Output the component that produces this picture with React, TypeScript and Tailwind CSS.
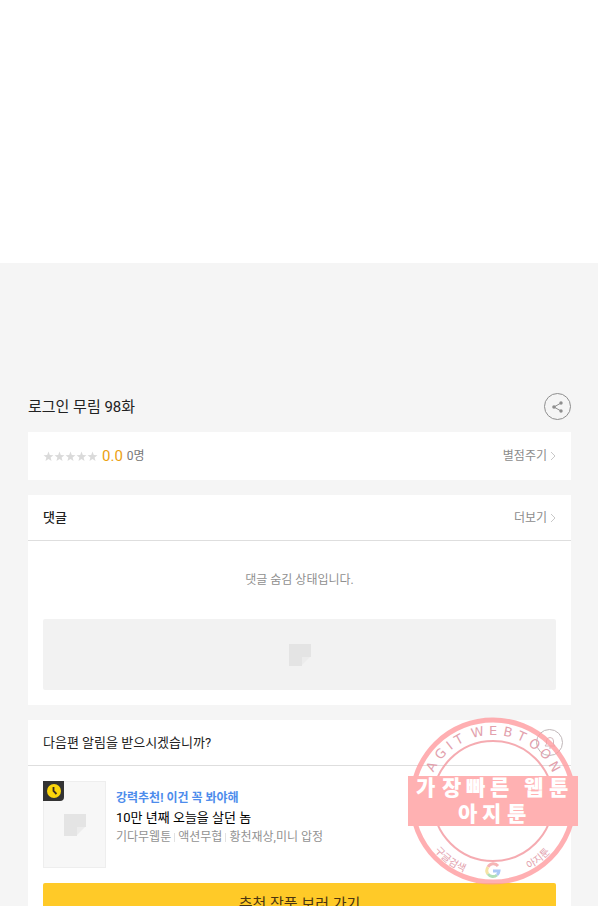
import { ReactNode } from 'react'

const FONT = "font-['Roboto','Noto_Sans_CJK_KR',sans-serif]"

const Arrow = () => (
  <svg width="6" height="10" viewBox="0 0 6 10" fill="none" stroke="#c8c8c8" aria-hidden="true">
    <path d="M1 1l4 4-4 4" />
  </svg>
)

const Star = () => (
  <svg width="11" height="11" viewBox="0 0 12 12" fill="#dadada" aria-hidden="true">
    <path d="M6 .6l1.4 3.7 4 .2-3.1 2.5 1 3.9L6 8.700l-3.300 2.200 1-3.900L.6 4.500l4-.2z" />
  </svg>
)

const Placeholder = () => (
  <svg width="22" height="22" viewBox="0 0 22 22" aria-hidden="true">
    <path d="M0 0h22v13h-9v9H0z" fill="#e4e4e4" />
    <path d="M13 13h8l-8 8z" fill="#ececec" />
  </svg>
)

const Card = ({ className = '', children }: { className?: string; children: ReactNode }) => (
  <section className={`bg-white ${className}`}>{children}</section>
)

const MoreLink = ({ children }: { children: ReactNode }) => (
  <a href="#" className="flex items-center gap-[3px] text-[12px] leading-[18px] text-[#8c8c8c]">
    {children}
    <Arrow />
  </a>
)

// angle from the top of the ring and half the glyph width, one entry per character
const RING_TEXT = 'AGIT WEBTOON'
const RING = [
  [-61, 4], [-48, 5], [-38, 2], [-29, 4], [-21, 2], [-13, 6],
  [0, 4], [12, 4], [24, 4], [36, 5], [48, 5], [61, 5],
].map(([angle, half]) => {
  const a = (angle * Math.PI) / 180
  return {
    angle,
    x: 86 + 66 * Math.sin(a) - half * Math.cos(a),
    y: 85 - 66 * Math.cos(a) - half * Math.sin(a),
  }
})

const Stamp = () => (
  <svg
    className="pointer-events-none absolute -top-1 -right-2"
    width="172"
    height="172"
    viewBox="0 0 172 172"
    fill="none"
    aria-hidden="true"
  >
    <defs>
      <path id="arc-bottom" d="M9 85a77 77 0 0 0 154 0" />
    </defs>
    <circle cx="86" cy="85" r="81" stroke="#ff9b9f" strokeOpacity=".8" strokeWidth="5" />
    <circle cx="86" cy="85" r="60" stroke="#f3969d" strokeOpacity=".8" strokeWidth="2" />
    <g fill="#e2a0ac" style={{ fontFamily: "'Noto Sans CJK KR', sans-serif" }}>
      <text
        fontSize="13"
        style={{ fontFamily: "'DejaVu Sans', sans-serif" }}
        x={RING.map((r) => r.x).join(' ')}
        y={RING.map((r) => r.y).join(' ')}
        rotate={RING.map((r) => r.angle).join(' ')}
      >
        {RING_TEXT}
      </text>
      <text fontSize="10">
        <textPath href="#arc-bottom" startOffset="54">구글검색</textPath>
      </text>
      <text fontSize="10">
        <textPath href="#arc-bottom" startOffset="158">아지툰</textPath>
      </text>
    </g>
    <path d="M1 60h170v50H1z" fill="#ffb1b2" />
    <g
      fill="#fff"
      fontWeight="900"
      fontSize="21"
      style={{ fontFamily: "'Noto Sans CJK KR', sans-serif" }}
    >
      <text x="9 35 59 83 105 117 142" y="79">가장빠른 웹툰</text>
      <text x="51 75 100" y="105">아지툰</text>
    </g>
    <g strokeWidth="3">
      <path d="M91 150a6 6 0 0 0-10 1" stroke="#f6b5b5" />
      <path d="M81 151a6 6 0 0 0 0 7" stroke="#f5e3a4" />
      <path d="M81 158a6 6 0 0 0 9 1" stroke="#b1dfb9" />
      <path d="M90 159a6 6 0 0 0 2-4h-6" stroke="#abc8f6" />
    </g>
  </svg>
)

const App = () => {
  return (
    <div className={`flex h-screen flex-col overflow-hidden bg-[#f5f5f5] text-[#222] ${FONT}`}>
      <div className="h-[263px] shrink-0 bg-white" />

      <main className="flex shrink-0 flex-col pt-[130px] pr-[27px] pl-7">
        <header className="mb-3 flex items-center justify-between">
          <h1 className="text-[15px] leading-[22px]">로그인 무림 98화</h1>
          <button
            type="button"
            aria-label="공유"
            className="flex size-[27px] items-center justify-center rounded-full border border-[#8e8e8e]"
          >
            <svg width="11" height="12" viewBox="0 0 11 12" fill="#8e8e8e" aria-hidden="true">
              <path d="M9 2L2 6l7 4" fill="none" stroke="#8e8e8e" />
              <circle cx="9" cy="2" r="1.7" />
              <circle cx="2" cy="6" r="1.8" />
              <circle cx="9" cy="10" r="1.7" />
            </svg>
          </button>
        </header>

        <Card className="mb-[15px] flex h-12 items-center justify-between px-[15px]">
          <div className="flex items-center gap-1">
            <div className="flex">
              <Star />
              <Star />
              <Star />
              <Star />
              <Star />
            </div>
            <strong className="text-[15px] leading-[22px] font-normal text-[#eba010]">0.0</strong>
            <span className="text-[12px] leading-[18px] text-[#777]">0명</span>
          </div>
          <MoreLink>별점주기</MoreLink>
        </Card>

        <Card className="mb-[15px] pb-[15px]">
          <div className="flex h-[46px] items-center justify-between border-b border-[#dedede] px-[15px]">
            <h2 className="text-[13px] leading-5 font-medium">댓글</h2>
            <MoreLink>더보기</MoreLink>
          </div>
          <p className="py-[29px] text-center text-[12px] leading-5 text-[#8f8f8f]">
            댓글 숨김 상태입니다.
          </p>
          <div className="mx-[15px] flex h-[71px] items-center justify-center rounded-xs bg-[#f2f2f2]">
            <Placeholder />
          </div>
        </Card>

        <Card className="relative pb-[15px]">
          <div className="flex h-[46px] items-center justify-between border-b border-[#dedede] px-[15px]">
            <h2 className="text-[13px] leading-5">다음편 알림을 받으시겠습니까?</h2>
            <button
              type="button"
              aria-label="알림"
              className="mr-[-7px] flex size-[27px] items-center justify-center rounded-full border border-[#c0b7b9]"
            >
              <svg width="12" height="13" viewBox="0 0 12 13" fill="none" stroke="#d2b9bd" aria-hidden="true">
                <path d="M1 10h10L9.500 8V5a3.500 3.500 0 0 0-7 0v3zM5 12h2" />
              </svg>
            </button>
          </div>
          <a href="#" className="flex gap-[10px] p-[15px]">
            <div className="relative flex h-[87px] w-[63px] items-center justify-center border border-[#eee] bg-[#f7f7f7]">
              <Placeholder />
              <span className="absolute -top-px -left-px flex h-5 w-[21px] items-center justify-center rounded-br-sm bg-[#333]">
                <svg width="14" height="14" viewBox="0 0 14 14" aria-hidden="true">
                  <circle cx="7" cy="7" r="7" fill="#fbd50b" />
                  <path d="M6.500 3v4l3 3" fill="none" stroke="#3a2a20" strokeWidth="1.800" />
                </svg>
              </span>
            </div>
            <div className="pt-[7px]">
              <p className="text-[12px] leading-5 font-bold text-[#4d8cec]">강력추천! 이건 꼭 봐야해</p>
              <h3 className="text-[13px] leading-5 text-black">10만 년째 오늘을 살던 놈</h3>
              <p className="flex items-center gap-[3px] text-[12px] leading-[18px] text-[#929292]">
                <span>기다무웹툰</span>
                <span className="h-[9px] w-px bg-[#e2e2e2]" />
                <span>액션무협</span>
                <span className="h-[9px] w-px bg-[#e2e2e2]" />
                <span>황천재상,미니 압정</span>
              </p>
            </div>
          </a>
          <div className="px-[15px]">
            <button type="button" className="h-[42px] w-full rounded-xs bg-[#ffca28] text-[15px] text-[#4b3510]">
              추천 작품 보러 가기
            </button>
          </div>
          <Stamp />
        </Card>
      </main>
    </div>
  )
}

export default App
